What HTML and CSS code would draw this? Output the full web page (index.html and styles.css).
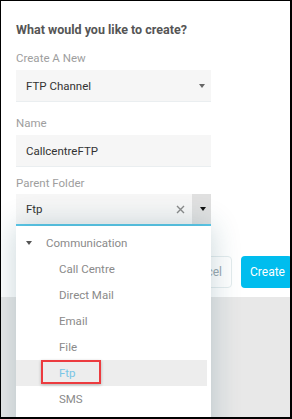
FILE: index.html
```html
<!DOCTYPE html>
<html>
<head>
<meta charset="utf-8">
<link rel="stylesheet" href="styles.css">
</head>
<body>
<div class="frame">
  <div class="dialog">
    <div class="title">What would you like to create?</div>
    <div class="label first">Create A New</div>
    <div class="field select">
      <span class="value">FTP Channel</span>
      <span class="caret"></span>
    </div>
    <div class="label">Name</div>
    <div class="field input">
      <span class="value">CallcentreFTP</span>
    </div>
    <div class="label tight">Parent Folder</div>
    <div class="field combo">
      <span class="value">Ftp</span>
      <span class="clear">
        <svg width="9" height="9" viewBox="0 0 9 9"><path d="M1 1L8 8M8 1L1 8" stroke="#8a8a8a" stroke-width="1.4" fill="none"/></svg>
      </span>
      <span class="toggle"><span class="caret dark"></span></span>
    </div>
    <div class="buttons">
      <button class="btn cancel">Cancel</button>
      <button class="btn create">Create</button>
    </div>
  </div>
  <div class="backdrop"></div>

  <div class="dropdown">
    <ul class="tree">
      <li class="row parent"><span class="caret tree-caret"></span><span>Communication</span></li>
      <li class="row child">Call Centre</li>
      <li class="row child">Direct Mail</li>
      <li class="row child">Email</li>
      <li class="row child">File</li>
      <li class="row child active">Ftp<span class="mark"></span></li>
      <li class="row child">SMS</li>
    </ul>
  </div>
</div>
</body>
</html>
```
FILE: styles.css
```css
* { box-sizing: border-box; }
html, body { margin: 0; padding: 0; background: #fff; }
body { font-family: Roboto, "Noto Sans", Arial, sans-serif; }

.frame {
  position: relative;
  width: 292px;
  height: 419px;
  border-style: solid;
  border-color: #000;
  border-width: 1px 2px 2px 1px;
  overflow: hidden;
  display: flex;
  flex-direction: column;
}

.dialog {
  background: #fff;
  height: 296px;
  padding: 21px 0 0 15px;
  display: flex;
  flex-direction: column;
}

.title {
  font-size: 12.5px;
  font-weight: 700;
  color: #555;
  line-height: 16px;
}

.label {
  font-size: 11.5px;
  color: #9e9e9e;
  line-height: 16px;
  margin-top: 13px;
  margin-bottom: 4px;
}
.label.first { margin-top: 12px; }
.label.tight { margin-top: 8px; margin-bottom: 3px; }

.field {
  width: 195px;
  height: 32px;
  flex-shrink: 0;
  background: #f6f6f6;
  border-bottom: 1px solid #eaeef0;
  display: flex;
  align-items: center;
  padding-left: 10px;
  font-size: 11.5px;
  color: #333;
  position: relative;
}
.field .value { flex: 1; }

.caret {
  display: inline-block;
  width: 0; height: 0;
  border-left: 3px solid transparent;
  border-right: 3px solid transparent;
  border-top: 4px solid #666;
}
.select .caret { margin-right: 6px; }
.caret.dark { border-top-color: #111; }

.combo {
  border-bottom: 2px solid #5cc9ea;
  padding-right: 0;
}
.combo .clear { width: 9px; height: 9px; display: flex; margin-right: 7px; }
.combo .toggle {
  width: 19px;
  align-self: stretch;
  background: #e0e0e0;
  display: flex;
  align-items: center;
  justify-content: center;
  padding-left: 3px;
}

.buttons {
  display: flex;
  justify-content: flex-end;
  gap: 9px;
  margin-top: 30px;
  margin-right: -2px;
}
.btn {
  font-family: inherit;
  font-size: 12px;
  height: 32px;
  border-radius: 4px;
  padding: 0 9px;
}
.cancel {
  background: #fff;
  border: 1px solid #e4ecee;
  color: #9aa9b0;
}
.create {
  background: #00bdee;
  border: none;
  color: #fff;
  width: 51px;
}

.backdrop {
  flex: 1;
  background: #e8e8e8;
}

.dropdown {
  position: absolute;
  left: 15px;
  top: 225px;
  width: 195px;
  height: 220px;
  background: #fff;
  box-shadow: 0 0 28px rgba(20, 80, 95, 0.24);
  padding: 4px 4px 0 0;
}
.tree { list-style: none; margin: 0; padding: 0; }
.row {
  height: 26px;
  display: flex;
  align-items: center;
  font-size: 11.5px;
  color: #8a8a8a;
  position: relative;
}
.parent { padding-left: 10px; }
.tree-caret { margin-right: 14px; border-top-color: #555; }
.child { padding-left: 43px; }
.active { background: #ededed; color: #78c6e6; }
.mark {
  position: absolute;
  left: 25px;
  top: 0;
  width: 60px;
  height: 24px;
  border: 2px solid #ec3b3f;
  box-shadow: 0 1px 3px rgba(0,0,0,0.25);
}
```
